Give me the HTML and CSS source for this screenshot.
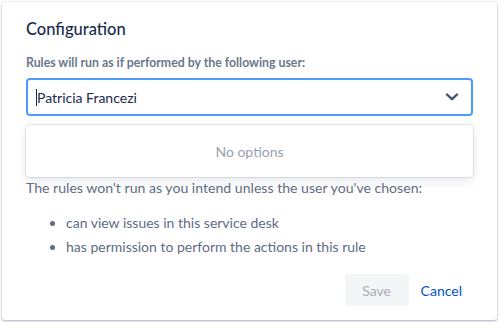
FILE: index.html
```html
<!DOCTYPE html>
<html>
<head>
<meta charset="utf-8">
<link rel="stylesheet" href="styles.css">
</head>
<body>
<div class="page">
  <div class="modal">
    <h1 class="title">Configuration</h1>
    <label class="label">Rules will run as if performed by the following user:</label>
    <div class="select">
      <span class="value"><span class="caret"></span>Patricia Francezi</span>
      <svg class="chev" width="14" height="10" viewBox="0 0 14 10"><path d="M2 2.5 L7 7.2 L12 2.5" fill="none" stroke="#42526E" stroke-width="2.4" stroke-linecap="round" stroke-linejoin="round"/></svg>
    </div>
    <div class="menu">No options</div>
    <p class="text">The rules won't run as you intend unless the user you've chosen:</p>
    <ul class="list">
      <li>can view issues in this service desk</li>
      <li>has permission to perform the actions in this rule</li>
    </ul>
    <div class="footer">
      <button class="btn save">Save</button>
      <button class="btn cancel">Cancel</button>
    </div>
  </div>
</div>
</body>
</html>
```
FILE: styles.css
```css
html, body {
  margin: 0;
  padding: 0;
  background: #fff;
}
body {
  font-family: "Lato", "Noto Sans", sans-serif;
  color: #172B4D;
}
.page {
  width: 501px;
  height: 322px;
  padding: 2px 4px 0 2px;
  box-sizing: border-box;
  overflow: hidden;
}
.modal {
  background: #fff;
  border-radius: 3px;
  box-shadow: 0 0 0 1px rgba(9,30,66,0.08), 0 2px 3px rgba(9,30,66,0.2);
  height: 318px;
  box-sizing: border-box;
  padding: 15px 24px 0 24px;
  display: flex;
  flex-direction: column;
}
.title {
  margin: 0;
  font-size: 16.5px;
  font-weight: 500;
  line-height: 24px;
  color: #172B4D;
}
.label {
  margin-top: 14px;
  font-size: 12.3px;
  font-weight: 700;
  line-height: 16px;
  color: #6B778C;
}
.select {
  margin-top: 7px;
  height: 38px;
  box-sizing: border-box;
  border: 2px solid #4C9AFF;
  border-radius: 4px;
  display: flex;
  align-items: center;
  justify-content: space-between;
  padding: 0 12px 0 8px;
}
.value {
  font-size: 14px;
  color: #172B4D;
  display: flex;
  align-items: center;
}
.caret {
  display: inline-block;
  width: 1px;
  height: 17px;
  background: #172B4D;
}
.menu {
  margin-top: 9px;
  height: 52px;
  box-sizing: border-box;
  border-radius: 4px;
  box-shadow: 0 0 0 1px rgba(9,30,66,0.1), 0 4px 11px rgba(9,30,66,0.1);
  display: flex;
  align-items: center;
  justify-content: center;
  font-size: 14px;
  color: #97A0AF;
}
.text {
  margin: 1px 0 0 0;
  font-size: 14.1px;
  line-height: 20px;
  color: #5E6C84;
}
.list {
  margin: 15px 0 0 0;
  padding-left: 40px;
  font-size: 14px;
  line-height: 20px;
  color: #5E6C84;
}
.list li + li {
  margin-top: 4px;
}
.footer {
  margin-top: auto;
  margin-bottom: 14px;
  display: flex;
  justify-content: flex-end;
  gap: 4px;
  padding-right: 3px;
}
.btn {
  font-family: inherit;
  font-size: 14px;
  height: 32px;
  border: none;
  border-radius: 3px;
  padding: 0 16px;
  background: transparent;
  cursor: default;
}
.save {
  background: #F4F5F7;
  color: #A5ADBA;
  width: 64px;
}
.cancel {
  color: #0052CC;
  padding: 0 8px;
}
```
